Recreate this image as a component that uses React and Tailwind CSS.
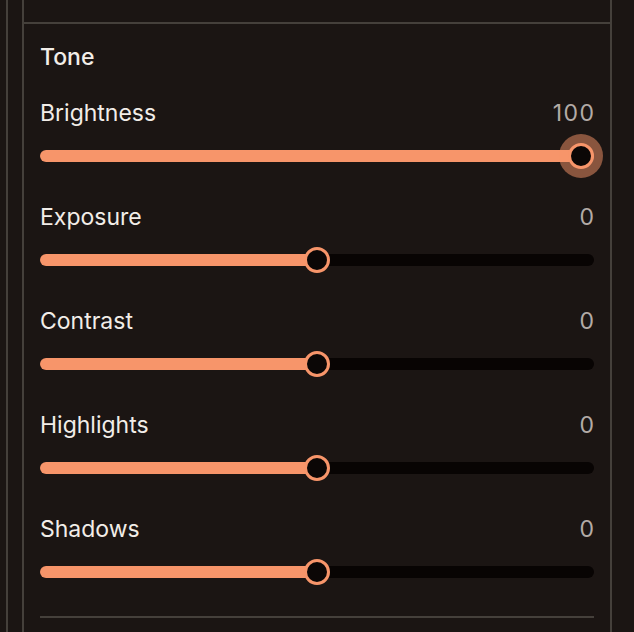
const sliders = [
  { label: "Brightness", value: 100, min: -100, max: 100, active: true },
  { label: "Exposure", value: 0, min: -100, max: 100 },
  { label: "Contrast", value: 0, min: -100, max: 100 },
  { label: "Highlights", value: 0, min: -100, max: 100 },
  { label: "Shadows", value: 0, min: -100, max: 100 },
];

function Slider({ value, min, max, active }) {
  const pct = (value - min) / (max - min);
  return (
    <div className="relative mt-[16px] flex h-[26px] items-center">
      <div className="relative h-3 w-full overflow-hidden rounded-full bg-[#080403]">
        <div className="absolute inset-y-0 left-0 bg-[#f7956a]" style={{ width: `${pct * 100}%` }} />
      </div>
      <div
        className={`absolute top-0 h-[26px] w-[26px] -translate-x-1/2 rounded-full border-[3px] border-[#f7956a] bg-[#0b0706] ${
          active ? "ring-[9px] ring-[#f7956a]/50" : ""
        }`}
        style={{ left: `calc(13px + (100% - 26px) * ${pct})` }}
      />
    </div>
  );
}

export default function App() {
  return (
    <div
      className="flex h-[632px] w-full overflow-hidden bg-[#1b1513] text-[23px] leading-7 text-[#f2ede8]"
      style={{ fontFamily: "Inter, 'Noto Sans', sans-serif" }}
    >
      <div className="ml-[6px] w-[16px] shrink-0 border-l-2 border-[#45403b]" />
      <div className="flex w-[590px] shrink-0 flex-col border-x-2 border-[#45403b]">
        <div className="h-[24px] border-b-2 border-[#45403b]" />
        <div className="px-4 pt-[18px]">
          <h3 className="relative top-px font-medium">Tone</h3>
          <div className="mt-[29px] flex flex-col gap-[34px]">
            {sliders.map((s) => (
              <div key={s.label}>
                <div className="flex items-center justify-between">
                  <span>{s.label}</span>
                  <span className="-mr-[1.5px] tracking-[1.5px] text-[#b3aba6]">{s.value}</span>
                </div>
                <Slider {...s} />
              </div>
            ))}
          </div>
          <div className="mt-[31px] h-[2px] bg-[#45403b]" />
        </div>
      </div>
    </div>
  );
}
